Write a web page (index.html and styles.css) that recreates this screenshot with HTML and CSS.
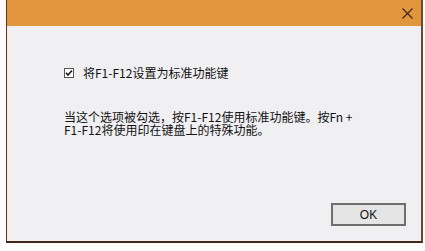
FILE: index.html
```html
<!DOCTYPE html>
<html lang="zh-CN">
<head>
  <meta charset="UTF-8" />
  <meta name="viewport" content="width=device-width, initial-scale=1" />
  <title>功能键设置</title>
  <link rel="stylesheet" href="styles.css">
</head>
<body>

  <div class="dialog">
    <div class="titlebar">
      <button class="close-btn" aria-label="关闭">
        <svg width="11" height="11" viewBox="0 0 11 11">
          <path d="M0.5 0.5 L10.5 10.5 M10.5 0.5 L0.5 10.5" stroke="#3a2414" stroke-width="1.1" fill="none" />
        </svg>
      </button>
    </div>

    <div class="content">
      <label class="option">
        <span class="checkbox">
          <svg width="8" height="8" viewBox="0 0 8 8">
            <path d="M1 3.8 L3 6 L7 1.5" stroke="#1a1a1a" stroke-width="1.6" fill="none" />
          </svg>
        </span>
        将F1-F12设置为标准功能键
      </label>

      <div class="desc">
        <div>当这个选项被勾选，按F1-F12使用标准功能键。按Fn +</div>
        <div>F1-F12将使用印在键盘上的特殊功能。</div>
      </div>

      <div class="footer">
        <button class="ok-btn">OK</button>
      </div>
    </div>
  </div>

</body>
</html>
```

FILE: styles.css
```css
* {
  box-sizing: border-box;
}
body {
  margin: 0;
  background: #fdfbfb;
  font-family: "Noto Sans CJK SC", "Liberation Sans", sans-serif;
  font-size: 12px;
  color: #111;
}

/* 对话框 */
.dialog {
  margin-left: 6px;
  width: 417px;
  height: 243px;
  display: flex;
  flex-direction: column;
  background: #f0eff2;
  border-left: 1px solid #5a3a22;
  border-right: 2px solid #6a4830;
  border-bottom: 2px solid #3f2719;
}

/* 标题栏 */
.titlebar {
  height: 26px;
  background: #e1953c;
  display: flex;
  justify-content: flex-end;
  align-items: center;
  padding-right: 8px;
}
.close-btn {
  background: none;
  border: none;
  padding: 0;
  width: 11px;
  height: 11px;
  display: flex;
}

/* 内容 */
.content {
  flex: 1;
  display: flex;
  flex-direction: column;
  padding: 41px 15px 15px 56px;
  border-left: 1px solid #fbe9dd;
}
.option {
  display: flex;
  align-items: center;
  height: 12px;
  line-height: 12px;
}
.checkbox {
  width: 10px;
  height: 10px;
  margin-right: 9px;
  border: 1px solid #555;
  background: #fff;
  display: flex;
  align-items: center;
  justify-content: center;
}
.desc {
  margin-top: 31px;
  line-height: 13px;
}

/* 按钮 */
.footer {
  margin-top: auto;
  display: flex;
  justify-content: flex-end;
}
.ok-btn {
  width: 75px;
  height: 23px;
  background: #e5e5e5;
  border: 2px solid #6f6f6f;
  font-family: "Liberation Sans", sans-serif;
  font-size: 12px;
  color: #111;
  padding: 0;
}
```
